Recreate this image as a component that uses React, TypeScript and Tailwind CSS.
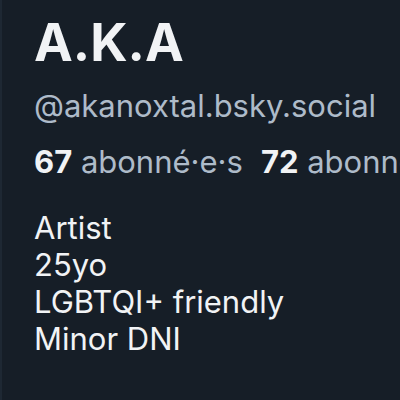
import React from 'react';

const App: React.FC = () => {
  return (
    <div className="w-[400px] h-[400px] overflow-hidden bg-[#161e27] border-l-2 border-[#1e2833] font-['Inter',sans-serif]">
      <div className="pl-[32px] pt-[13px] whitespace-nowrap">
        <h1 className="text-[52px] font-bold leading-[60px] text-[#f1f3f5]">A.K.A</h1>
        <p className="text-[31px] leading-[38px] mt-[14px] text-[#aebbc9]">@akanoxtal.bsky.social</p>
        <div className="flex gap-[18px] mt-[18px] text-[31px] leading-[38px]">
          <span>
            <span className="font-bold text-[#f1f3f5]">67</span>{' '}
            <span className="text-[#aebbc9]">abonné·e·s</span>
          </span>
          <span>
            <span className="font-bold text-[#f1f3f5]">72</span>{' '}
            <span className="text-[#aebbc9]">abonnements</span>
          </span>
        </div>
        <div className="mt-[28px] text-[31px] leading-[37px] text-[#f1f3f5]">
          <p>Artist</p>
          <p>25yo</p>
          <p>LGBTQI+ friendly</p>
          <p>Minor DNI</p>
        </div>
      </div>
    </div>
  );
};

export default App;
